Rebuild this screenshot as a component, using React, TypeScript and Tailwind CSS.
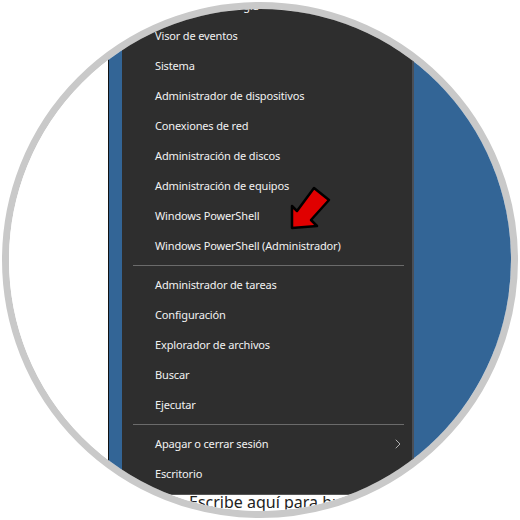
import { ChevronRight } from "lucide-react";

type Item = { label: string; sub?: boolean } | "sep";

const items: Item[] = [
  { label: "Opciones de energía" },
  { label: "Visor de eventos" },
  { label: "Sistema" },
  { label: "Administrador de dispositivos" },
  { label: "Conexiones de red" },
  { label: "Administración de discos" },
  { label: "Administración de equipos" },
  { label: "Windows PowerShell" },
  { label: "Windows PowerShell (Administrador)" },
  "sep",
  { label: "Administrador de tareas" },
  { label: "Configuración" },
  { label: "Explorador de archivos" },
  { label: "Buscar" },
  { label: "Ejecutar" },
  "sep",
  { label: "Apagar o cerrar sesión", sub: true },
  { label: "Escritorio" },
];

function Arrow() {
  return (
    <svg className="absolute left-0 top-0 pointer-events-none" width="520" height="520" viewBox="0 0 520 520">
      <polygon
        points="292,228 292,206 297,211 314,188 329,200 311,220 317,226"
        fill="#e00000"
        stroke="#000"
        strokeWidth="2.5"
        strokeLinejoin="round"
      />
    </svg>
  );
}

export default function App() {
  return (
    <div className="relative w-[520px] h-[520px] bg-white p-[2px]" style={{ fontFamily: '"Noto Sans", "Open Sans", sans-serif' }}>
      <div className="w-[516px] h-[516px] rounded-full border-[7px] border-[#c9c9c9] overflow-hidden flex flex-col bg-white">
        <div className="flex h-[485px] shrink-0">
          <div className="w-[99px] bg-white" />
          <div className="w-[14px] bg-[#336596] border-l border-[#111]" />
          <div className="w-[292px] bg-[#2e2e2e] border-r-2 border-[#4a4f57] overflow-hidden">
            <div className="-mt-[18px]">
              {items.map((it, i) =>
                it === "sep" ? (
                  <div key={i} className="h-[9px] flex items-center pl-[11px] pr-[8px]">
                    <div className="h-px w-full bg-[#6b6b6b]" />
                  </div>
                ) : (
                  <div key={i} className="h-[30px] flex items-center pl-[33px] pr-[6px] text-[11px] tracking-[-0.15px] text-[#f2f2f2]">
                    <span className="flex-1 whitespace-nowrap">{it.label}</span>
                    {it.sub && <ChevronRight size={16} strokeWidth={1.2} className="text-[#cfcfcf]" />}
                  </div>
                )
              )}
            </div>
          </div>
          <div className="flex-1 bg-[#336596]" />
        </div>
        <div className="flex-1 bg-white border-t border-[#555] flex items-start pl-[150px]">
          <div className="w-[10px] h-[10px] rounded-full border-2 border-[#333] mt-[1px] mr-[20px]" />
          <span className="text-[16px] leading-[14px] text-[#222] whitespace-nowrap">Escribe aquí para buscar</span>
        </div>
      </div>
      <Arrow />
    </div>
  );
}
